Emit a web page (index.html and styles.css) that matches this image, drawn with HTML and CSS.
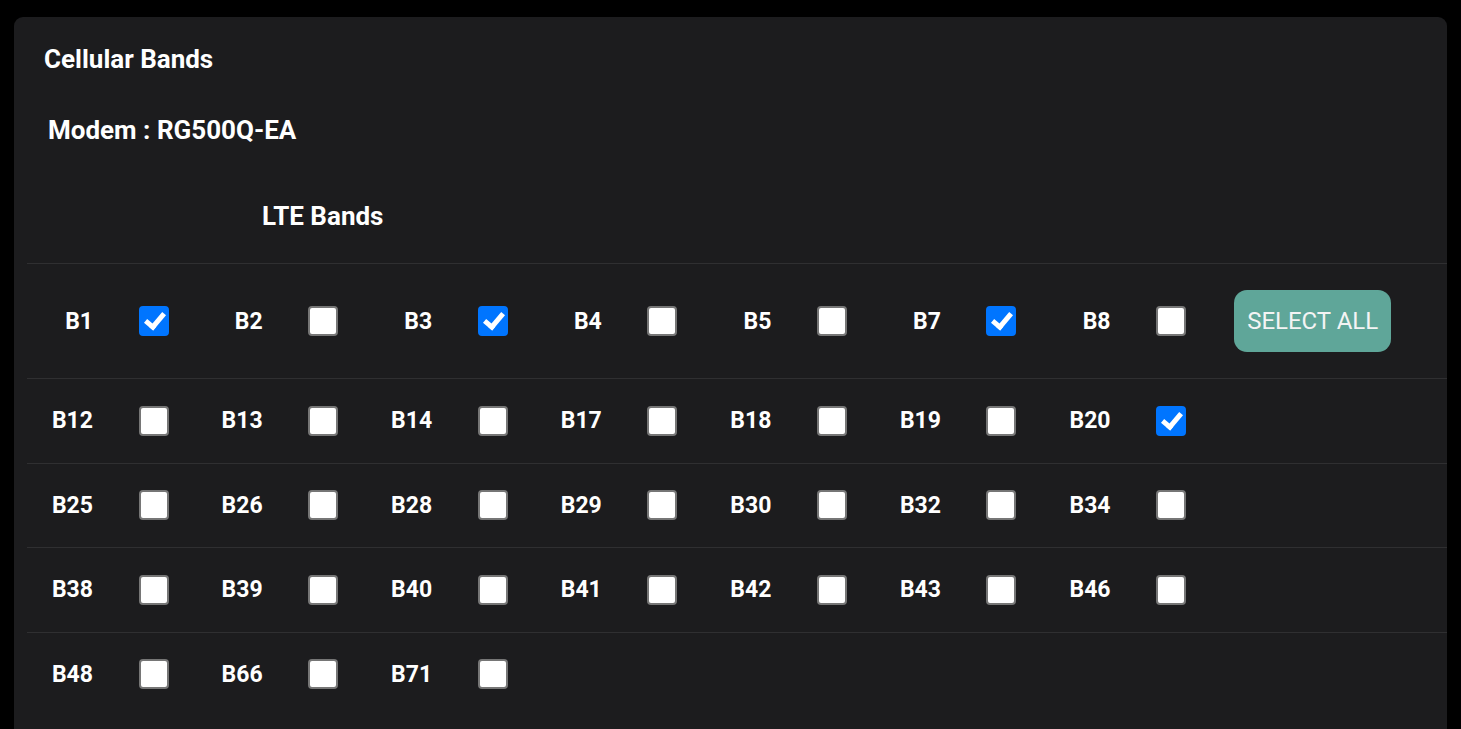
FILE: index.html
```html
<!DOCTYPE html>
<html>
<head>
<meta charset="utf-8">
<link rel="stylesheet" href="styles.css">
</head>
<body>
<div class="card">
  <h2 class="card-title">Cellular Bands</h2>
  <div class="modem">Modem : RG500Q-EA</div>
  <div class="band-head">LTE Bands</div>
  <div class="band-table">
    <div class="band-row first">
      <div class="pair"><span class="lbl">B1</span><input type="checkbox" checked></div>
      <div class="pair"><span class="lbl">B2</span><input type="checkbox"></div>
      <div class="pair"><span class="lbl">B3</span><input type="checkbox" checked></div>
      <div class="pair"><span class="lbl">B4</span><input type="checkbox"></div>
      <div class="pair"><span class="lbl">B5</span><input type="checkbox"></div>
      <div class="pair"><span class="lbl">B7</span><input type="checkbox" checked></div>
      <div class="pair"><span class="lbl">B8</span><input type="checkbox"></div>
      <div class="btn-cell"><button class="select-all">SELECT ALL</button></div>
    </div>
    <div class="band-row">
      <div class="pair"><span class="lbl">B12</span><input type="checkbox"></div>
      <div class="pair"><span class="lbl">B13</span><input type="checkbox"></div>
      <div class="pair"><span class="lbl">B14</span><input type="checkbox"></div>
      <div class="pair"><span class="lbl">B17</span><input type="checkbox"></div>
      <div class="pair"><span class="lbl">B18</span><input type="checkbox"></div>
      <div class="pair"><span class="lbl">B19</span><input type="checkbox"></div>
      <div class="pair"><span class="lbl">B20</span><input type="checkbox" checked></div>
    </div>
    <div class="band-row">
      <div class="pair"><span class="lbl">B25</span><input type="checkbox"></div>
      <div class="pair"><span class="lbl">B26</span><input type="checkbox"></div>
      <div class="pair"><span class="lbl">B28</span><input type="checkbox"></div>
      <div class="pair"><span class="lbl">B29</span><input type="checkbox"></div>
      <div class="pair"><span class="lbl">B30</span><input type="checkbox"></div>
      <div class="pair"><span class="lbl">B32</span><input type="checkbox"></div>
      <div class="pair"><span class="lbl">B34</span><input type="checkbox"></div>
    </div>
    <div class="band-row">
      <div class="pair"><span class="lbl">B38</span><input type="checkbox"></div>
      <div class="pair"><span class="lbl">B39</span><input type="checkbox"></div>
      <div class="pair"><span class="lbl">B40</span><input type="checkbox"></div>
      <div class="pair"><span class="lbl">B41</span><input type="checkbox"></div>
      <div class="pair"><span class="lbl">B42</span><input type="checkbox"></div>
      <div class="pair"><span class="lbl">B43</span><input type="checkbox"></div>
      <div class="pair"><span class="lbl">B46</span><input type="checkbox"></div>
    </div>
    <div class="band-row">
      <div class="pair"><span class="lbl">B48</span><input type="checkbox"></div>
      <div class="pair"><span class="lbl">B66</span><input type="checkbox"></div>
      <div class="pair"><span class="lbl">B71</span><input type="checkbox"></div>
    </div>
  </div>
</div>
</body>
</html>
```
FILE: styles.css
```css
html, body {
  margin: 0;
  padding: 0;
  background: #000;
}
body {
  font-family: Roboto, "Noto Sans", sans-serif;
  color: #fff;
}
.card {
  margin: 17px 14px 0 14px;
  background: #1c1c1e;
  border-radius: 9px 9px 0 0;
  padding: 27px 0 40px 0;
}
.card-title {
  margin: 0;
  padding-left: 30px;
  font-size: 26px;
  line-height: 30px;
  font-weight: 700;
}
.modem {
  margin-top: 41px;
  padding-left: 34px;
  font-size: 26px;
  line-height: 30px;
  font-weight: 700;
}
.band-head {
  margin-top: 56px;
  padding-left: 248px;
  font-size: 26px;
  line-height: 30px;
  font-weight: 700;
}
.band-table {
  margin-top: 32px;
  margin-left: 13px;
}
.band-row {
  display: grid;
  grid-template-columns: repeat(7, 169.6px) 1fr;
  align-items: center;
  border-top: 1px solid #2f2f31;
  height: 83.5px;
}
.band-row.first {
  height: 114px;
}
.pair {
  display: flex;
  align-items: center;
}
.lbl {
  width: 66px;
  text-align: right;
  font-size: 23px;
  font-weight: 700;
}
.pair input {
  appearance: none;
  -webkit-appearance: none;
  box-sizing: border-box;
  position: relative;
  width: 30px;
  height: 30px;
  margin: 0 0 0 45.5px;
  background: #fff;
  border: 2px solid #767676;
  border-radius: 4px;
}
.pair input:checked {
  background: #0075ff;
  border-color: #0075ff;
}
.pair input:checked::after {
  content: "";
  position: absolute;
  left: 8px;
  top: 1px;
  width: 7px;
  height: 15px;
  border-right: 5px solid #fff;
  border-bottom: 5px solid #fff;
  transform: rotate(40deg);
}
.btn-cell {
  padding-left: 20px;
}
.select-all {
  width: 157px;
  height: 62px;
  border: none;
  border-radius: 13px;
  background: #5fa699;
  color: #f4f4f4;
  font-family: Roboto, sans-serif;
  font-size: 24px;
  font-weight: 400;
  padding: 0;
}
```
